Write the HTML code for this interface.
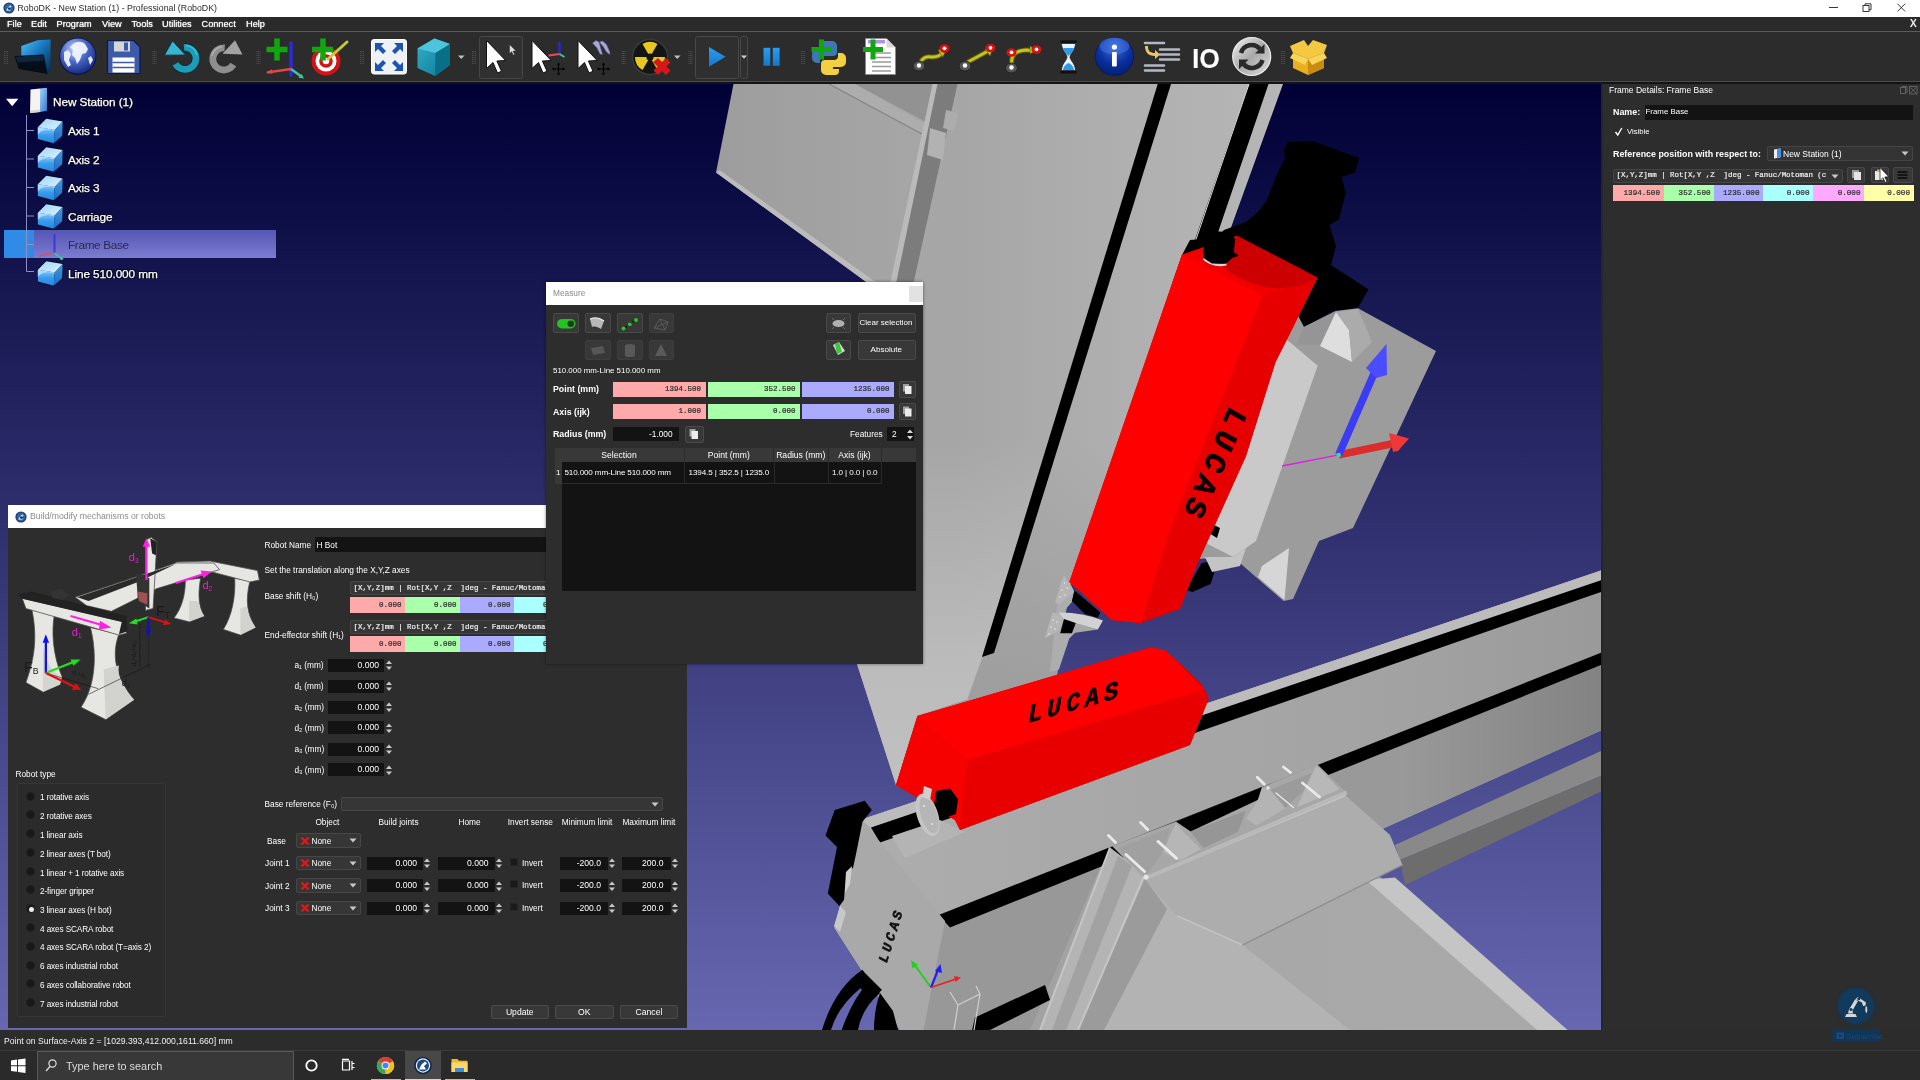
<!DOCTYPE html>
<html lang="en">
<head>
<meta charset="utf-8">
<title>RoboDK - New Station (1) - Professional (RoboDK)</title>
<style>
*{box-sizing:border-box;margin:0;padding:0}
html,body{width:1920px;height:1080px;overflow:hidden;background:#2c2c2c}
body{position:relative;font-family:"Liberation Sans",sans-serif;font-size:9px;color:#fff;-webkit-font-smoothing:antialiased;filter:blur(.55px)}
.abs{position:absolute}
.t{position:absolute;white-space:pre;line-height:1}
#titlebar{position:absolute;left:0;top:0;width:1920px;height:17px;background:#fff;color:#222}
#menubar{position:absolute;left:0;top:17px;width:1920px;height:15px;background:#2a2a2a;border-bottom:1px solid #5c5c5c}
#menubar span{position:absolute;top:3px;font-size:9.2px;color:#fff;line-height:1;text-shadow:0 0 1px #fff}
#toolbar{position:absolute;left:0;top:32px;width:1920px;height:52px;background:#2c2c2c;border-bottom:2px solid #141418;box-shadow:inset 0 -1px 0 #4a4a50}
#viewport{position:absolute;left:0;top:84px;width:1601px;height:946px;overflow:hidden;background:linear-gradient(#000036,#6767b1)}
#rpanel{position:absolute;left:1601px;top:84px;width:319px;height:946px;background:#2d2d2d}
#statusbar{position:absolute;left:0;top:1030px;width:1920px;height:20px;background:#2c2c2c}
#taskbar{position:absolute;left:0;top:1050px;width:1920px;height:30px;background:#2a2a2a;border-top:1px solid #3a3a3a}
.grip{position:absolute;top:20px;width:3px;height:13px;background:repeating-linear-gradient(#555 0 1px,transparent 1px 2px)}
</style>
</head>
<body>
<div id="titlebar">
<svg class="abs" style="left:3px;top:2px" width="12" height="12" viewBox="0 0 12 12"><circle cx="6" cy="6" r="5.6" fill="#1d3f73"/><circle cx="6" cy="6" r="4.3" fill="#2c66a8"/><path d="M3.2 8.6L5.2 5.2 7.4 3.4 8.6 4.6 6.6 6 7.6 8.6z" fill="#fff"/><circle cx="6.2" cy="6.6" r="1.3" fill="#17365f"/></svg>
<span class="t" style="left:17.5px;top:3.5px;font-size:8.800px;color:#2a2a2a">RoboDK - New Station (1) - Professional (RoboDK)</span>
<svg class="abs" style="left:1820px;top:0" width="100" height="17" viewBox="1820 0 100 17" fill="none" stroke="#222" stroke-width="0.9"><path d="M1829 7.5h9"/><rect x="1863" y="5.5" width="6" height="6"/><path d="M1865 5.5v-1.7h6v6h-2"/><path d="M1897.5 3.8l7.6 7.6M1905.100 3.8l-7.6 7.6"/></svg>
</div>
<div id="menubar">
<span style="left:7px">File</span><span style="left:31px">Edit</span><span style="left:56.500px">Program</span><span style="left:102px">View</span><span style="left:131.500px">Tools</span><span style="left:162px">Utilities</span><span style="left:201.500px">Connect</span><span style="left:246px">Help</span>
<span style="left:1910px;font-size:10px;top:2px">X</span>
</div>
<div id="toolbar">
<svg class="abs" style="left:0;top:0" width="1920" height="50" viewBox="0 32 1920 50">
<defs>
<linearGradient id="gFold2" x1="0" y1="0" x2="1" y2="1"><stop offset="0" stop-color="#52c0f4"/><stop offset="0.45" stop-color="#1878c0"/><stop offset="1" stop-color="#052848"/></linearGradient>
<linearGradient id="gFold" x1="0" y1="0" x2="1" y2="1"><stop offset="0" stop-color="#3aa0e8"/><stop offset="0.5" stop-color="#0a3a66"/><stop offset="1" stop-color="#02101e"/></linearGradient>
<radialGradient id="gGlobe" cx="0.4" cy="0.3" r="0.8"><stop offset="0" stop-color="#c8d8ff"/><stop offset="0.45" stop-color="#4a68c8"/><stop offset="1" stop-color="#0c1e70"/></radialGradient>
<radialGradient id="gInfo" cx="0.5" cy="0.25" r="0.9"><stop offset="0" stop-color="#3b6fe0"/><stop offset="0.5" stop-color="#0a2fa0"/><stop offset="1" stop-color="#041860"/></radialGradient>
<linearGradient id="gPlay" x1="0" y1="0" x2="0" y2="1"><stop offset="0" stop-color="#2a9cf0"/><stop offset="1" stop-color="#1577cc"/></linearGradient>
<linearGradient id="gSync" x1="0" y1="0" x2="1" y2="1"><stop offset="0" stop-color="#f4f4f4"/><stop offset="0.5" stop-color="#a8a8a8"/><stop offset="1" stop-color="#e0e0e0"/></linearGradient>
<linearGradient id="gCube" x1="0" y1="0" x2="1" y2="1"><stop offset="0" stop-color="#35b0cc"/><stop offset="1" stop-color="#0a7892"/></linearGradient>
<g id="grip"><path d="M0 0v13M1.500 0v13M3 0v13" stroke="#585858" stroke-width="0.8" stroke-dasharray="1 1"/></g>
<g id="curs"><path d="M0 0v28l6.500-6 4.500 10.500 4-1.800-4.600-10.200 8.800-.5z" fill="#fff" stroke="#111" stroke-width="1"/></g>
<g id="mv"><path d="M-5 0h10M0-5v10" stroke="#000" stroke-width="1.100" fill="none"/><path d="M-6.500 0l2.300-1.800v3.600zM6.500 0l-2.300-1.800v3.600zM0-6.500l-1.800 2.300h3.600zM0 6.500l-1.800-2.300h3.600z" fill="#000"/></g>
</defs>
<use href="#grip" x="4.500" y="51"/><use href="#grip" x="153" y="51"/><use href="#grip" x="257" y="51"/><use href="#grip" x="360.500" y="51"/><use href="#grip" x="472.500" y="51"/><use href="#grip" x="622" y="51"/><use href="#grip" x="689" y="51"/><use href="#grip" x="801.500" y="51"/><use href="#grip" x="1281.500" y="51"/>
<!-- folder -->
<path d="M21.250 45.900l16.250-5.650 13.100-.65v31.900l-3.100 2.500-26-6z" fill="url(#gFold2)"/><path d="M14.400 55.900l29.350-1.300 3.750 19.400-28.750-5z" fill="#050d18"/><path d="M15.500 56.800l27.500-1.200 1 5-26 2z" fill="#12304e" opacity=".7"/>
<!-- globe -->
<circle cx="77.800" cy="56.300" r="18.600" fill="#0b1550"/><circle cx="77.800" cy="56" r="17.600" fill="url(#gGlobe)"/><path d="M73 44c4-3 9-3 12 0l3 5-2 4-4 1-2 6-3 4-2-6-3-3 1-5-3-3zM64 52l4-2 3 4-2 6 2 5-3 2-4-7zM88 58l3-2 2 4-3 5z" fill="#f4f6ff" opacity=".92"/>
<!-- save -->
<path d="M107.500 40.500h26l6.500 6.500v26.500h-32.500z" fill="#3c5aa8" stroke="#0c1a50" stroke-width="1.200"/><rect x="114" y="41.500" width="16" height="10" fill="#d6d6d6"/><rect x="124" y="42.500" width="4" height="8" fill="#3c5aa8"/><rect x="112.500" y="57.500" width="22" height="15" fill="#fff"/><path d="M112.500 62.500h22M112.500 67.500h22" stroke="#3c5aa8" stroke-width="1.300"/>
<!-- undo -->
<path d="M184.040 47.440A11 11 0 1 1 175.470 63.900" fill="none" stroke="#0a2c34" stroke-width="8.600"/><path d="M184.040 47.440A11 11 0 1 1 175.470 63.900" fill="none" stroke="#1c9cb6" stroke-width="6.600"/><path d="M186 45.500A12.500 12.500 0 0 1 197 55" fill="none" stroke="#4cc4dc" stroke-width="2" opacity=".7"/><path d="M172.500 40.900l-8.100 14.300 21.100-.2z" fill="#36b4d0" stroke="#0a2c34" stroke-width=".8"/>
<!-- redo -->
<path d="M224.700 48A11 11 0 1 0 233.300 64.500" fill="none" stroke="#8e8e8e" stroke-width="6.800"/><path d="M222 46.500A12.500 12.500 0 0 0 212 56" fill="none" stroke="#b4b4b4" stroke-width="2" opacity=".7"/><path d="M235 40.300l7.500 14.300-20-.9z" fill="#a2a2a2"/>
<!-- add frame -->
<path d="M291 43v32" stroke="#2a2ae0" stroke-width="3.400" stroke-linecap="round"/><path d="M291 69l-24 3.500" stroke="#e04848" stroke-width="2.600"/><path d="M266 72.500l6-3.200.5 4.500z" fill="#e04848"/><path d="M291 69l11 8" stroke="#38c8a0" stroke-width="2.600"/><path d="M304 78.500l-5.500-.8 3-3.800z" fill="#38c8a0"/><path d="M277 38.500v22M266.500 49.500h21" stroke="#0ea80e" stroke-width="5.500"/>
<!-- add target -->
<circle cx="326" cy="61" r="14.500" fill="#d41414"/><circle cx="326" cy="61" r="10.500" fill="#fff"/><circle cx="326" cy="61" r="6.800" fill="#d41414"/><circle cx="326" cy="61" r="3.300" fill="#fff"/><path d="M328 59l19-17" stroke="#c8c832" stroke-width="3" stroke-linecap="round"/><path d="M323 38.500v22M312 49.500h21" stroke="#0ea80e" stroke-width="5.500"/>
<!-- fit -->
<rect x="371.500" y="39.500" width="35" height="34.500" rx="2.500" fill="#eef1f6" stroke="#fff" stroke-width="1"/><path d="M375 43h9l-3 3 5 5-3 3-5-5-3 3zM403 43v9l-3-3-5 5-3-3 5-5-3-3zM375 71v-9l3 3 5-5 3 3-5 5 3 3zM403 71h-9l3-3-5-5 3-3 5 5 3-3z" fill="#1c54b0"/>
<!-- cube -->
<path d="M417.500 48.500l17-10 15.500 5.500v21l-15 11-17.500-8z" fill="url(#gCube)"/><path d="M417.500 48.500l17-10 15.500 5.500-14.500 9z" fill="#4cc4dc"/><path d="M435.500 53l14.500-9v21l-15 11z" fill="#077088"/>
<path d="M458 55.500h6.500l-3.250 3.500z" fill="#bdbdbd"/>
<!-- select -->
<rect x="479.500" y="36.500" width="43" height="42" rx="2" fill="#303030" stroke="#474747"/>
<use href="#curs" x="486.500" y="40.500"/><path d="M509.500 44.500v9l2.200-1.800 1.600 3.500 1.400-.7-1.600-3.400 3-.2z" fill="#ddd" stroke="#222" stroke-width=".5"/>
<use href="#curs" x="532" y="40.500"/><use href="#mv" x="558.500" y="69"/><path d="M559.500 42v12" stroke="#2a2ac8" stroke-width="2.400"/><path d="M559.500 54l-11 1.500" stroke="#e05050" stroke-width="2"/><path d="M559.500 54l5 3" stroke="#38c890" stroke-width="2"/>
<use href="#curs" x="578" y="40.500"/><use href="#mv" x="603.500" y="69"/><path d="M592.500 43l3.500-2.500 3 1.500 1.500 5.500 2 7-2.500-.5-3-6zM599.500 42l3-1 4 3.500 3.500 8-.5 2-3-2.500-3-5z" fill="#a8a8d8" stroke="#5c5c98" stroke-width=".6"/>
<!-- radiation -->
<circle cx="650" cy="57" r="17.500" fill="#141414" stroke="#3a3a3a" stroke-width="1.500"/><path d="M650 57l-7.500-13a15 15 0 0 1 15 0zM650 57l15 0a15 15 0 0 1-7.500 13zM650 57l-7.500 13a15 15 0 0 1-7.500-13z" fill="#e8c820"/><circle cx="650" cy="57" r="3.600" fill="#141414"/><path d="M653 62l5-4 4 4 4-4 4.500 4.500-4 4 4 4-4.500 4.500-4-4-4 4-4.500-4.500 4-4z" fill="#d41818"/>
<path d="M674 55.500h6.500l-3.250 3.500z" fill="#bdbdbd"/>
<!-- play -->
<rect x="695.500" y="36.500" width="43" height="42" rx="2" fill="#2f2f2f" stroke="#484848"/><rect x="740.500" y="36.500" width="7" height="42" rx="2" fill="#2f2f2f" stroke="#484848"/>
<path d="M709 47l16.500 9.800-16.500 10z" fill="url(#gPlay)"/><path d="M741 55.500h6l-3 3.200z" fill="#d0d0d0"/>
<rect x="763.500" y="47.800" width="6.800" height="18" fill="url(#gPlay)"/><rect x="772.800" y="47.800" width="6.800" height="18" fill="url(#gPlay)"/>
<!-- python -->
<path d="M823 41h9a5 5 0 0 1 5 5v6a4 4 0 0 1-4 4h-9a4 4 0 0 0-4 4v3h-3a5 5 0 0 1-5-5v-4a5 5 0 0 1 5-5h8v-2h-6v-2a4 4 0 0 1 4-4z" fill="#3d78b0"/><path d="M835 75h-9a5 5 0 0 1-5-5v-6a4 4 0 0 1 4-4h9a4 4 0 0 0 4-4v-3h3a5 5 0 0 1 5 5v4a5 5 0 0 1-5 5h-8v2h6v2a4 4 0 0 1-4 4z" fill="#f2d040"/><path d="M821.500 39.500v20M811.500 49.500h20" stroke="#0ea80e" stroke-width="5"/>
<!-- add doc -->
<path d="M865.500 38.500h21l9 9v27h-30z" fill="#fdfdfd" stroke="#888" stroke-width=".8"/><path d="M886.500 38.500v9h9z" fill="#d8d8d8"/><rect x="868" y="40" width="17" height="3.500" fill="#b090f0"/><path d="M872 53h19M872 57.500h19M872 62h19M872 66.500h19M872 71h19" stroke="#9a9a9a" stroke-width="1.300"/><path d="M873 39.500v20M863 49.500h20" stroke="#0ea80e" stroke-width="5"/>
<!-- paths -->
<g fill="none" stroke-linecap="round"><path d="M920 63c4-8 9-6 13-6s8-2 10-5" stroke="#5a5a10" stroke-width="5"/><path d="M920 63c4-8 9-6 13-6s8-2 10-5" stroke="#c4c41c" stroke-width="3"/><path d="M966 63l24-13" stroke="#5a5a10" stroke-width="5"/><path d="M966 63l24-13" stroke="#c4c41c" stroke-width="3"/><path d="M1012 66c-2-12 4-15 14-16l12 1" stroke="#5a5a10" stroke-width="5"/><path d="M1012 66c-2-12 4-15 14-16l12 1" stroke="#c4c41c" stroke-width="3"/></g>
<path d="M946 49l-8 1 5 7zM993 48l-8 1 5 7zM1030 46v8l6-4z" fill="#c4c41c" stroke="#5a5a10" stroke-width=".6"/>
<g><ellipse cx="919" cy="66" rx="6" ry="5" fill="#555" stroke="#222"/><circle cx="919" cy="65.500" r="2.200" fill="#fff"/><ellipse cx="965" cy="66" rx="6" ry="5" fill="#555" stroke="#222"/><circle cx="965" cy="65.500" r="2.200" fill="#fff"/><ellipse cx="1011.500" cy="68" rx="6" ry="5" fill="#555" stroke="#222"/><circle cx="1011.500" cy="67.500" r="2.200" fill="#fff"/>
<ellipse cx="944.500" cy="48.500" rx="5" ry="4.200" fill="#d81010"/><circle cx="944.500" cy="48.300" r="1.900" fill="#fff"/><ellipse cx="990.500" cy="48" rx="5" ry="4.200" fill="#d81010"/><circle cx="990.500" cy="47.800" r="1.900" fill="#fff"/><ellipse cx="1011.500" cy="52.500" rx="5" ry="4.200" fill="#d81010"/><circle cx="1011.500" cy="52.300" r="1.900" fill="#fff"/><ellipse cx="1036.500" cy="49.500" rx="5" ry="4.200" fill="#d81010"/><circle cx="1036.500" cy="49.300" r="1.900" fill="#fff"/></g>
<!-- hourglass -->
<path d="M1060 40h17v3.500h-17zM1060 70.500h17v3.500h-17z" fill="#111" stroke="#333" stroke-width=".6"/><path d="M1061.500 43.500h14c0 7-5.500 10-5.500 13.500s5.500 6.500 5.500 13.500h-14c0-7 5.500-10 5.500-13.500s-5.500-6.500-5.500-13.500z" fill="#e8f4ff" stroke="#222" stroke-width=".8"/><path d="M1063 48h11c-1 4-4 6-5.500 8-1.500-2-4.500-4-5.500-8zM1063 70c.5-4 3-6 5.500-7 2.500 1 5 3 5.500 7z" fill="#2f9ae8"/>
<!-- info -->
<circle cx="1114.400" cy="56.500" r="19.600" fill="#0a1a60"/><circle cx="1114.400" cy="56.300" r="18.600" fill="url(#gInfo)"/><ellipse cx="1114.400" cy="46" rx="15" ry="8.500" fill="#5a8af0" opacity=".35"/><circle cx="1114.400" cy="47" r="2.600" fill="#fff"/><rect x="1112" y="52" width="4.800" height="14.500" rx=".8" fill="#fff"/>
<!-- list -->
<path d="M1145 43h19M1160 49.500h19M1160 54.500h19M1160 59.500h19M1145 65.500h19M1145 70.500h19" stroke="#b4b8c4" stroke-width="2.600" stroke-linecap="round"/><path d="M1148 46c0 5 2 7 7 7v-3l5 4.500-5 4.500v-3c-7 0-10-4-10-10z" fill="#e8c860"/>
<!-- IO -->
<text x="1192" y="67.500" font-family="Liberation Sans,sans-serif" font-size="27" font-weight="bold" fill="#fff" textLength="28" lengthAdjust="spacingAndGlyphs">IO</text>
<!-- sync -->
<circle cx="1251.700" cy="56.500" r="19" fill="url(#gSync)"/><circle cx="1251.700" cy="56.500" r="19" fill="none" stroke="#eee" stroke-width="1.200"/><path d="M1241 53a11 11 0 0 1 19-4" fill="none" stroke="#2a2a2a" stroke-width="4.500"/><path d="M1262.500 60a11 11 0 0 1-19 4" fill="none" stroke="#2a2a2a" stroke-width="4.500"/><path d="M1264.500 44v9.500h-9.500zM1239 69v-9.500h9.500z" fill="#2a2a2a"/>
<!-- box -->
<path d="M1293 53l15 6 16-6v15l-16 7-15-7z" fill="#e8b020"/><path d="M1308 59l16-6v15l-16 7z" fill="#c88c10"/><path d="M1293 53l-3-7 14-6 4 6zM1324 53l3-8-14-5-5 6zM1293 53l15 6 16-6-16-7z" fill="#f4c840"/><path d="M1293 53l15 6-3 6-15-7zM1324 53l-16 6 4 6 15-7z" fill="#f8d458"/>
</svg>
</div>
<div id="viewport">
<svg class="abs" style="left:0;top:0" width="1601" height="946" viewBox="0 84 1601 946">
<defs>
<linearGradient id="gBeam" x1="957" y1="0" x2="1280" y2="0" gradientUnits="userSpaceOnUse"><stop offset="0" stop-color="#a6a6a6"/><stop offset="0.55" stop-color="#b0b0b0"/><stop offset="1" stop-color="#b6b6b6"/></linearGradient>
<linearGradient id="gPlate" x1="716" y1="0" x2="940" y2="0" gradientUnits="userSpaceOnUse"><stop offset="0" stop-color="#9d9d9d"/><stop offset="1" stop-color="#a7a7a7"/></linearGradient>
<linearGradient id="gFront" x1="940" y1="0" x2="1601" y2="0" gradientUnits="userSpaceOnUse"><stop offset="0" stop-color="#999999"/><stop offset="0.7" stop-color="#999999"/><stop offset="1" stop-color="#838383"/></linearGradient>
<linearGradient id="gTop" x1="862" y1="0" x2="1601" y2="0" gradientUnits="userSpaceOnUse"><stop offset="0" stop-color="#adadad"/><stop offset="0.7" stop-color="#a3a3a3"/><stop offset="1" stop-color="#9a9a9a"/></linearGradient>
<linearGradient id="gLow" x1="1050" y1="0" x2="1560" y2="0" gradientUnits="userSpaceOnUse"><stop offset="0" stop-color="#a2a2a2"/><stop offset="0.35" stop-color="#a8a8a8"/><stop offset="1" stop-color="#a9a9a9"/></linearGradient>
<linearGradient id="gBL" x1="0" y1="440" x2="0" y2="780" gradientUnits="userSpaceOnUse"><stop offset="0" stop-color="#bfbfbf" stop-opacity="0"/><stop offset="0.65" stop-color="#bfbfbf" stop-opacity=".85"/><stop offset="1" stop-color="#c0c0c0" stop-opacity="1"/></linearGradient>
<linearGradient id="gBR" x1="0" y1="440" x2="0" y2="700" gradientUnits="userSpaceOnUse"><stop offset="0" stop-color="#a0a0a0" stop-opacity="0"/><stop offset="1" stop-color="#9e9e9e" stop-opacity="1"/></linearGradient>
</defs>
<!-- top-left plate -->
<g id="plate">
<polygon points="733.5,84 716,172.5 880,292 960,292 960,84" fill="url(#gPlate)"/>
<polygon points="716,172.5 719.5,170 884,288 880,292" fill="#bcbcbc"/>
<polygon points="855,84 934,84 926,122" fill="#929292"/>
<polygon points="829,84 855,84 925,124 922,134" fill="#adadad"/><path d="M829 84L922 134" stroke="#868686" stroke-width="1.400"/>
<polygon points="932.5,84 937.5,84 896,284 890,284" fill="#bababa"/>
<polygon points="937.5,84 958,84 914,284 896,284" fill="#7c7c7c"/>
</g>
<!-- vertical beam -->
<polygon points="957.5,84 1283,84 1229,233 1182,255 1069.700,586 1057,675 917.500,716 896,785 857,664 912,290" fill="url(#gBeam)"/>
<polygon points="912,290 1094,290 982,657 967.400,699.400 917,715.600 896,785 857,664" fill="url(#gBL)"/><polygon points="1050,440 1120,440 1069.700,586 1057,675 917.500,716 967.400,699.400 983,657" fill="url(#gBR)"/>
<polygon points="930,128 946,133 943,160 927,155" fill="#b2b2b2"/><polygon points="946,110 958,113 954,131 943,128" fill="#adadad"/>
<polygon points="1157.700,84 1171,84 994,653 982,657" fill="#000"/>
<polygon points="1249,84 1268.500,84 1212,250 1185,262 1190,254" fill="#000"/>
<path d="M1249 84L1191 254" stroke="#d8d8d8" stroke-width="1"/>
<!-- black motor -->
<polygon points="1224,230 1246,222 1243,242 1198,254" fill="#000"/>
<polygon points="1288,142 1312,141 1359,158 1355,172.500 1341.700,176.700 1345.700,193 1339,219.600 1329.600,225 1336,246.500 1331,265 1368.500,289.500 1357.800,308 1333.600,311 1304,327 1262,296 1182,255 1190,240 1241,235.800 1246,222 1258.500,211.600 1266.500,201 1276,176.700 1285,158 1284,150" fill="#000"/>
<!-- carriage right of red box -->
<polygon points="1290,300 1304,327 1336,311 1358,308.300 1436,351 1353,528 1319,541 1293,599 1283.600,601 1233,557 1180,560" fill="#9c9c9c"/>
<polygon points="1285,338 1317.700,365.700 1256,541 1233,557 1200,540" fill="#c9c9c9"/>
<polygon points="1304,327 1336,311 1322,345 1296,345" fill="#959595"/>
<polygon points="1336,312 1320,346 1352,362 1349,330" fill="#dedede"/><polygon points="1336,312 1358,309 1372,342 1352,362 1349,330" fill="#ababab"/>
<polygon points="1262,566 1289,548 1284.500,600 1258,577" fill="#d6d6d6"/>
<polygon points="1201.500,563.300 1218.300,559.400 1210.600,584 1192.400,591.900 1186,590" fill="#000"/><polygon points="1212,524 1220,528 1217,538 1209,533" fill="#000"/>
<polygon points="1205,557 1233,557 1246,548 1240,566 1212,572" fill="#c4c4c4"/>
<!-- bracket under red box -->
<polygon points="1060,580 1069.300,581.500 1074.400,592 1071.900,602 1062.800,612.600 1077,630.700 1069.300,638.500 1058.900,669.600 1050,672" fill="#adadad"/>
<polygon points="1064,575 1074.400,591.900 1058.900,604.800 1055,602.200" fill="#b6b6b6"/><polygon points="1052.400,612.600 1062.800,615.200 1058.900,630.700 1044.600,638.500" fill="#b6b6b6"/>
<g fill="#e6e6e6"><circle cx="1064.500" cy="583" r=".8"/><circle cx="1067.500" cy="588" r=".8"/><circle cx="1062" cy="590" r=".8"/><circle cx="1065" cy="595" r=".8"/><circle cx="1060" cy="597" r=".8"/><circle cx="1053" cy="620" r=".8"/><circle cx="1057" cy="622" r=".8"/><circle cx="1051" cy="627" r=".8"/><circle cx="1055" cy="629" r=".8"/><circle cx="1049" cy="634" r=".8"/></g>
<polygon points="1074.400,590.600 1082.200,597 1100.400,612.600 1097.800,617.800 1084.800,614 1071.900,601" fill="#000"/>
<path d="M1058.900 612.600Q1080 612 1103 620.400L1097.800 629.400Q1082 626 1064 619.500Z" fill="#d2d2d2"/>
<polygon points="1075.700,623 1097.800,629.400 1071.900,633.300" fill="#a8a8a8"/>
<polygon points="1064,619 1075.700,623 1071.900,633.300 1060.200,633.300" fill="#000"/>
<!-- upper red box -->
<polygon points="1182,254.600 1237,235.800 1317.500,277.400 1291.700,330 1275.500,362 1246,456 1197.700,563 1180,608.800 1139.400,623 1111.800,620 1069.300,582" fill="#f00000"/>

<polygon points="1182,254.600 1262.500,296.200 1170,530 1141,623 1111.800,620 1069.300,582" fill="#ff0000"/>
<polygon points="1262.500,296.200 1317.500,277.400 1291.700,330 1275.500,362 1246,456 1197.700,563 1180,608.800 1141,623 1170,530" fill="#e60000"/>
<path d="M1237 236L1317.500 277.800Q1292 292 1264 287Q1238 280 1222 266Z" fill="#cc0000"/>
<path d="M1203.400 258.500Q1212 267 1226.500 264.500" fill="none" stroke="#d4d4d4" stroke-width="2.200"/>
<polygon points="1214.400,231 1230,232.400 1235.200,238.900 1233.900,251.900 1239,255.700 1232.600,257.700 1226,263.500 1211.900,263.500 1204,258.300 1202.800,251.900 1206,240" fill="#000"/>
<text transform="translate(1230,405) rotate(113.500) skewX(-6)" font-family="Liberation Mono,monospace" font-weight="bold" font-size="30" fill="#0a0000" stroke="#0a0000" stroke-width=".7" letter-spacing="6.500">LUCAS</text>
<!-- frame arrows -->
<path d="M1282 466L1338.700 454.800" stroke="#e020e0" stroke-width="1.300"/>
<path d="M1338.700 454.800L1396 443" stroke="#dc2c2c" stroke-width="7.500"/><polygon points="1389,433 1409,438.500 1398,451 1393,452" fill="#f03838"/>
<path d="M1338.700 454.800L1376 369" stroke="#3c3cf4" stroke-width="7.500"/><polygon points="1366,368 1386.500,344 1387,375 1376,378" fill="#4c4cff"/>
<circle cx="1338.700" cy="455" r="2.200" fill="#30e0a0"/>
<!-- horizontal beam -->
<polygon points="861.500,819.500 1601,570.600 1601,730.600 935,1030 900,1030 834.500,928" fill="#a9a9a9"/>
<polygon points="861.500,819.500 1601,570.600 1601,665 945,921" fill="url(#gTop)"/>
<polygon points="861.500,819.500 1601,570.600 1601,581 871,828" fill="#bcbcbc"/>
<polygon points="1601,665 1601,730.600 935,1030 922.500,1030 945,921" fill="url(#gFront)"/>
<polygon points="945,921 1108,856 1050,1030 922.500,1030" fill="#989898"/>
<polygon points="1601,580.200 1601,591.900 880,842.500 871,827.500" fill="#000"/>
<polygon points="1601,652.800 1601,665 950,927.500 938.700,915" fill="#000"/>
<polygon points="1601,751 1601,776 1400,860 1395,845" fill="#898989"/><polygon points="1601,776 1601,791.500 1405,885 1400,860" fill="#6d6d6d"/>
<!-- lower big plate -->
<polygon points="1100,868 1345,795 1380,877 1567.500,1030 1030,1030" fill="url(#gLow)"/>
<polygon points="1366,880 1395,877.500 1567.500,1030 1537,1030" fill="#c5c5c5"/>
<polygon points="1145,879 1177.500,916 1242.500,945 1350,1030 1070,1030" fill="#b3b3b3"/><polygon points="1145,879 1167,909 1104,1030 1076,1030" fill="#9b9b9b"/>
<!-- bracket rail -->
<polygon points="1110,847.500 1145,874 1078,1030 1040,1030" fill="#b4b4b4"/><polygon points="1118,856 1132,866 1066,1030 1052,1030" fill="#a2a2a2"/><path d="M1110 847.500L1040 1030M1145 874L1078 1030" stroke="#c6c6c6" stroke-width="2"/>
<!-- carriage plate -->
<polygon points="1145,878.700 1345,795 1390,835 1402.500,865 1242.500,945 1177.500,916" fill="#adadad"/>
<path d="M1145 878.700L1345 795" stroke="#c8c8c8" stroke-width="2.500"/><path d="M1177.500 916L1242.500 945" stroke="#c2c2c2" stroke-width="1.500" fill="none"/><path d="M1242.500 945L1402.500 865" stroke="#8c8c8c" stroke-width="1.300" fill="none"/>
<!-- brackets on top -->
<polygon points="1112,846 1176,821.500 1262,787 1317.500,764.600 1347,793 1145,879" fill="#a7a7a7"/>
<polygon points="1176,821.500 1262,787 1257.700,800 1190.600,831.500" fill="#000"/>
<polygon points="1190.600,831.700 1246,810.500 1238,831.700 1203.700,848" fill="#969696"/>
<polygon points="1270.800,789.400 1312,773 1303,791 1285.400,808.300" fill="#9b9b9b"/>
<polygon points="1119,848 1170,828 1163,852 1147,874 1130,862" fill="#a0a0a0"/>
<polygon points="1176,823 1183.300,831.700 1200.800,849 1180.400,860.800 1163,852 1171.700,831.700" fill="#b6b6b6"/>
<polygon points="1262,788 1269.400,789.400 1285.400,808.300 1256.300,825.800 1246,818.500 1259.200,798" fill="#b4b4b4"/>
<polygon points="1316,766 1320.400,769 1339.400,789.400 1297,806.900 1305.800,788" fill="#b8b8b8"/>
<path d="M1145.400 878.300L1346.700 792.300" stroke="#b9b9b9" stroke-width="4"/>
<g stroke="#eaeaea" stroke-width="2.800" stroke-linecap="round"><path d="M1108.500 835.600l7 7M1140.600 822.500l7 7M1126 854.500l18.500 17M1158 841.400l18.500 17M1257.300 777.300l7 7M1283.500 767l7 5.500M1302.500 783l17 14"/><path d="M1276 793l17.500 14.500" stroke-width="1.300"/></g>
<circle cx="1146" cy="877" r="2.600" fill="#e4e4e4"/><circle cx="1268" cy="788" r="1.800" fill="#e4e4e4"/>
<!-- end cap -->
<polygon points="861.500,819.500 940,915 945,921 923.500,1030 900,1030 834.500,928" fill="#a9a9a9"/>
<polygon points="825.500,835.500 834.700,810 864.800,800.800 871.800,810 862.500,821.700 855.500,856.400 853,868 846,872.600 844,900 839.400,906 827.800,893.400 837,847" fill="#000"/><polygon points="846,872 852,866 850,884 845,893" fill="#d0d0d0"/><polygon points="834,926 840,906 846,912 840,932" fill="#c8c8c8"/>
<path d="M862.500 969.800Q834.700 988.300 822 1030L831 1030Q839.400 1002 869.400 981.400Z" fill="#000"/><path d="M869 981Q852 1000 841.700 1030L858 1030Q862 1008 880 993Z" fill="#000"/><path d="M880 993L893 1011 898 1030 874 1030Q874 1010 880 993Z" fill="#000"/><path d="M862 970L882 990 870 1000 858 985Z" fill="#000"/>
<polygon points="975,1017.500 1045,985 1050,1000 990,1030 972,1030" fill="#000"/>
<path d="M950 992l8 13 22-11-4-8M958 1005l-4 25M980 994l-6 36" stroke="#d0d0d0" stroke-width="1.200" fill="none"/>
<text transform="translate(886.500,964) rotate(-72.500) skewX(-10)" font-family="Liberation Mono,monospace" font-weight="bold" font-size="13.500" fill="#111" stroke="#111" stroke-width=".5" letter-spacing="3.200">LUCAS</text>
<path d="M931 987.500L914 964" stroke="#20d020" stroke-width="2"/><polygon points="911,960 918,965 912.500,968.500" fill="#20d020"/><path d="M931 987.500L938 970" stroke="#2020f0" stroke-width="2.200"/><polygon points="935,971 940.500,964 942,973" fill="#2020f0"/><path d="M931 987.500L956 979" stroke="#f02020" stroke-width="1.800"/><polygon points="954,976 961,977.500 955.500,982" fill="#f02020"/>
<!-- cylinder bracket -->
<polygon points="892,836 940,820 965,832 905,858" fill="#b4b4b4"/>
<!-- lower red box -->
<polygon points="917.500,716 1150,647.500 1165,650 1200,682.500 1208.700,698.700 1190,745 960,830 955,820 896,785" fill="#f00000"/>
<polygon points="917.500,716 967.500,760 960,830 955,820 896,785" fill="#f60000"/>
<polygon points="917.500,716 1150,647.500 1165,650 1200,682.500 1205,690 967.500,760" fill="#ff0000"/>
<polygon points="967.500,760 1205,690 1208.700,698.700 1190,745 960,830" fill="#e80000"/>
<polygon points="1165,650 1200,682.500 1208.700,698.700 1205,690" fill="#dc0000"/>
<polygon points="936,791 950,788.500 958,799 956,814 941,819 934,806" fill="#000"/>
<ellipse cx="927.500" cy="815" rx="10.500" ry="22" transform="rotate(-18 927.500 815)" fill="#c6c6c6"/><ellipse cx="929" cy="815" rx="8" ry="19" transform="rotate(-18 929 815)" fill="#b6b6b6"/><polygon points="924,786 932,789 930,800 922,797" fill="#d0d0d0"/><circle cx="924" cy="806" r="1" fill="#e8e8e8"/><circle cx="932" cy="824" r="1" fill="#e8e8e8"/>
<text transform="translate(1027,723) rotate(-15.500) skewX(-24)" font-family="Liberation Mono,monospace" font-weight="bold" font-size="24.500" fill="#0a0000" stroke="#0a0000" stroke-width=".6" letter-spacing="5">LUCAS</text>
</svg>
</div>
<div id="tree" class="abs" style="left:0;top:84px;width:330px;height:220px">
<div class="abs" style="left:4px;top:145.500px;width:272px;height:28.500px;background:linear-gradient(#5656b4,#7c7cd2)"></div>
<div class="abs" style="left:4px;top:145.500px;width:30px;height:28.500px;background:#2f8be6"></div>
<svg class="abs" style="left:0;top:0" width="330" height="220" viewBox="0 84 330 220">
<defs>
<linearGradient id="cbT" x1="0" y1="0" x2="1" y2="1"><stop offset="0" stop-color="#9ad4fc"/><stop offset="1" stop-color="#e0f2ff"/></linearGradient>
<linearGradient id="cbL" x1="0" y1="0" x2="0" y2="1"><stop offset="0" stop-color="#8ccffc"/><stop offset="0.5" stop-color="#3a9cec"/><stop offset="1" stop-color="#2488e4"/></linearGradient>
<linearGradient id="cbR" x1="0" y1="0" x2="0" y2="1"><stop offset="0" stop-color="#3f9ae6"/><stop offset="1" stop-color="#1a6cc8"/></linearGradient>
<linearGradient id="stB" x1="0" y1="0" x2="1" y2="1"><stop offset="0" stop-color="#a8d4f8"/><stop offset="1" stop-color="#2f78d0"/></linearGradient>
<g id="cube"><path d="M-12.200-3.750L-3.750-12.200 12.650-9.400 12.200 4.700 3.750 12.200-12.200 8z" fill="#0a1030" stroke="#060818" stroke-width="1.600" stroke-linejoin="round"/><path d="M-12.200-3.750L-3.750-12.200 12.650-9.400 4.700-.9z" fill="url(#cbT)"/><path d="M-12.200-3.750L4.700-.9 3.750 12.200-12.200 8z" fill="url(#cbL)"/><path d="M4.700-.9L12.650-9.400 12.200 4.700 3.750 12.200z" fill="url(#cbR)"/><path d="M-12.200 3.500c3-5 10-6 16.600-3.500l.3-.9-16.900-2.850z" fill="#bfe6ff" opacity=".75"/></g>
</defs>
<path d="M26.500 115v156.500h7.500M26.500 130.500h7.500M26.500 159h7.500M26.500 187.500h7.500M26.500 216h7.500M26.500 244.500h7.500" stroke="#8e8ec4" stroke-width="1" fill="none"/>
<path d="M6 98.700h12.400l-6.200 7.600z" fill="#fff"/>
<path d="M30.500 89.500l9.500-1v23.500l-10 1z" fill="#f4f4f2"/><path d="M40 88.500l7-.7v23l-7 1.200z" fill="url(#stB)"/><path d="M30 110.500l10-1v2.500l-10 1z" fill="#d8d8d4"/>
<use href="#cube" x="50" y="131"/><use href="#cube" x="50" y="159.500"/><use href="#cube" x="50" y="188"/><use href="#cube" x="50" y="216.500"/><use href="#cube" x="50" y="273.500"/>
<path d="M54.500 234v19" stroke="#3a3ad8" stroke-width="2"/><path d="M54.500 253l-16 3" stroke="#d85060" stroke-width="1.600"/><path d="M54.500 253l7 5.500" stroke="#38c8a0" stroke-width="1.600"/><circle cx="61.500" cy="258.500" r="1.600" fill="#38c8a0"/>
</svg>
<style>#tree .tt{position:absolute;white-space:nowrap;font-size:11.800px;line-height:1;color:#fff;text-shadow:1px 1px 0 #0a0a28,-1px 1px 0 #0a0a28,1px -1px 0 #0a0a28,-1px -1px 0 #0a0a28,0 1px 0 #0a0a28,0 -1px 0 #0a0a28;letter-spacing:-.1px;-webkit-text-stroke:.25px #fff}</style>
<span class="tt" style="left:53px;top:13.0px">New Station (1)</span>
<span class="tt" style="left:68px;top:42.0px">Axis 1</span>
<span class="tt" style="left:68px;top:70.5px">Axis 2</span>
<span class="tt" style="left:68px;top:99.0px">Axis 3</span>
<span class="tt" style="left:68px;top:127.5px">Carriage</span>
<span class="tt" style="left:68px;top:156px;color:#2a2a50;text-shadow:none;-webkit-text-stroke:0;letter-spacing:-.35px">Frame Base</span>
<span class="tt" style="left:68px;top:184.5px">Line 510.000 mm</span>
</div>
<div id="rpanel">
<style>
#rpanel .b{font-weight:bold}
#rpanel .t{font-size:8.900px;color:#fff}
#rpanel .cell{position:absolute;top:101px;height:16px;font-family:"Liberation Mono",monospace;font-size:7.600px;color:#2a2a2a;-webkit-text-stroke:.2px #2a2a2a;text-align:right;line-height:16.500px;padding-right:3.500px}
</style>
<div class="abs" style="left:0;top:0;width:2px;height:946px;background:#262626"></div>
<span class="t" style="left:8px;top:1.500px;font-size:8.500px">Frame Details: Frame Base</span>
<svg class="abs" style="left:297px;top:2px" width="20" height="9" viewBox="0 0 20 9" fill="none" stroke="#666" stroke-width=".9"><rect x="2.500" y="1.500" width="5" height="6"/><path d="M4 1.500v-1h5v6h-1.500"/><rect x="11.500" y=".5" width="7.500" height="7.500"/><path d="M12.500 1.500l5.500 5.500M18 1.500l-5.500 5.500"/></svg>
<span class="t b" style="left:12px;top:24px">Name:</span>
<div class="abs" style="left:43.500px;top:20.500px;width:268.500px;height:15px;background:#131313"></div>
<span class="t" style="left:44.500px;top:24.300px;font-size:7.900px">Frame Base</span>
<svg class="abs" style="left:13px;top:43px" width="10" height="10" viewBox="0 0 10 10"><path d="M1.500 5l2.300 3 4-7" stroke="#fff" stroke-width="1.400" fill="none"/></svg>
<span class="t" style="left:26px;top:43.800px;font-size:7.700px">Visible</span>
<span class="t b" style="left:12px;top:65.500px">Reference position with respect to:</span>
<div class="abs" style="left:165.500px;top:61.500px;width:146px;height:15.500px;background:#343434;border:1px solid #454545;border-radius:2px"></div>
<svg class="abs" style="left:172px;top:63.500px" width="9" height="11" viewBox="0 0 9 11"><path d="M1 1.500l6-1v9l-6 1z" fill="#eee"/><path d="M4 1l4-.7v9l-4 .8z" fill="#4a90e0"/></svg>
<span class="t" style="left:182px;top:65.500px;font-size:8.500px">New Station (1)</span>

<svg class="abs" style="left:300px;top:67px" width="8" height="5" viewBox="0 0 8 5"><path d="M.5.5h7l-3.500 4z" fill="#c8c8c8"/></svg>
<div class="abs" style="left:12px;top:84.500px;width:229.500px;height:14.500px;background:#353535;border:1px solid #454545;border-radius:2px"></div>
<span class="t" style="left:15.500px;top:88px;font-family:'Liberation Mono',monospace;font-size:7.450px;color:#f0f0f0;-webkit-text-stroke:.2px #f0f0f0">[X,Y,Z]mm | Rot[X,Y ,Z  ]deg - Fanuc/Motoman (c</span>
<svg class="abs" style="left:230px;top:89.500px" width="8" height="5" viewBox="0 0 8 5"><path d="M.5.5h7l-3.500 4z" fill="#c8c8c8"/></svg>
<div class="abs" style="left:246px;top:83px;width:18px;height:16px;background:#383838;border:1px solid #484848;border-radius:2px"></div>
<div class="abs" style="left:270px;top:83px;width:18px;height:16px;background:#383838;border:1px solid #484848;border-radius:2px"></div>
<div class="abs" style="left:292px;top:83px;width:19.500px;height:16px;background:#383838;border:1px solid #484848;border-radius:2px"></div>
<svg class="abs" style="left:246px;top:83px" width="66" height="16" viewBox="0 0 66 16"><rect x="5" y="3" width="7" height="8" fill="#9a9a9a"/><rect x="7" y="5" width="7" height="8" fill="#e4e4e4"/><rect x="28" y="4" width="8" height="9" fill="#e8e8e8"/><rect x="30" y="2.500" width="4" height="2.500" fill="#d8b060"/><path d="M50.500 5h10M50.500 8h10M50.500 11h10" stroke="#0a0a0a" stroke-width="1.600"/>
<path d="M33 .5v13l3-2.800 2.200 4.800 1.800-.9-2.200-4.600 4-.3z" fill="#fff" stroke="#111" stroke-width=".7"/></svg>
<div class="cell" style="left:12px;width:50.500px;background:#ffaaaa">1394.500</div>
<div class="cell" style="left:62.500px;width:50.500px;background:#aaffaa">352.500</div>
<div class="cell" style="left:113px;width:49px;background:#aaaaff">1235.000</div>
<div class="cell" style="left:162px;width:50px;background:#aaffff">0.000</div>
<div class="cell" style="left:212px;width:51px;background:#ffaaff">0.000</div>
<div class="cell" style="left:263px;width:49.500px;background:#ffffaa">0.000</div>

</div>
<div id="build" class="abs" style="left:7.500px;top:504.500px;width:679.500px;height:523.500px;background:#2d2d2d;z-index:3">
<style>
#build .t{font-size:8.300px;color:#fff}
#build .in{position:absolute;background:#131313}
#build .sp{position:absolute;height:13px;background:#131313;font-size:8.600px;color:#fff;text-align:right;line-height:13.500px}
#build .cb{position:absolute;height:14.500px;background:#363636;border:1px solid #474747;border-radius:2px}
#build .f{position:absolute;height:16.500px;font-family:"Liberation Mono",monospace;font-size:7.500px;color:#2a2a2a;-webkit-text-stroke:.2px #2a2a2a;text-align:right;line-height:17px;padding-right:3.500px}
#build .btn{position:absolute;top:500px;height:14.500px;background:#383838;border:1px solid #4a4a4a;border-radius:2px;font-size:8.600px;text-align:center;line-height:13px;color:#fff}
#build .rd{position:absolute;left:18.500px;width:9px;height:9px;border-radius:50%;background:#181818;border:1px solid #202020}
#build .rl{position:absolute;left:32.500px;font-size:8.200px;white-space:pre;line-height:1;color:#fff;letter-spacing:-.1px}
</style>
<div class="abs" style="left:0;top:0;width:680px;height:23px;background:#fff"></div>
<svg class="abs" style="left:7px;top:6px" width="12" height="12" viewBox="0 0 12 12"><circle cx="6" cy="6" r="5.600" fill="#1d3f73"/><circle cx="6" cy="6" r="4.300" fill="#2c66a8"/><path d="M3.200 8.600L5.200 5.200 7.400 3.400 8.600 4.600 6.600 6 7.600 8.600z" fill="#fff"/><circle cx="6.200" cy="6.600" r="1.300" fill="#17365f"/></svg>
<span class="t" style="left:22.500px;top:7px;color:#8c8c8c;font-size:8.700px">Build/modify mechanisms or robots</span>
<!-- robot picture -->
<svg class="abs" style="left:-2.500px;top:20.500px" width="270" height="205" viewBox="0 0 1422 1080">
<g fill="#e6e6e2" stroke="#4a4a4a" stroke-width="4" stroke-linejoin="round">
<path d="M950 290L1030 280C1015 370 1020 430 1050 480L970 510 890 490C930 440 950 370 950 290Z"/>
<path d="M1210 280L1290 295C1265 400 1275 470 1320 540L1240 580 1150 550C1195 480 1215 380 1210 280Z"/>
<path d="M900 195L1080 190 1330 240 1340 290 1290 300 1100 250 900 225Z"/>
<path d="M370 380L700 270 900 200 1100 200 1130 235 800 335 560 455 430 425Z"/>
<path d="M140 440L260 470C245 560 250 680 300 800L290 840 200 880 110 830C150 720 175 600 140 440Z"/>
<path d="M450 540L600 575C560 680 580 800 680 920L530 1025 400 960C470 860 490 700 450 540Z"/>
<path d="M90 385L620 510 640 570 600 580 110 440Z"/>
<path d="M740 80L770 65 800 90 780 440 740 450Z"/>
</g>
<path d="M520 760L600 740C590 800 620 860 680 920L530 1025Z" fill="#d2d2ce"/><path d="M200 640C215 720 250 780 300 800L290 840 200 880Z" fill="#d4d4d0"/>
<path d="M970 400L1020 400C1025 440 1035 460 1050 480L970 510Z" fill="#d2d2ce"/><path d="M1240 440L1272 430C1280 480 1300 510 1320 540L1240 580Z" fill="#d2d2ce"/>
<polygon points="70,365 140,350 640,480 645,560 600,575 615,510 90,388" fill="#222"/>
<polygon points="380,380 700,272 900,205 700,300 440,400" fill="#2a2a2a"/><polygon points="240,350 300,335 340,370 300,395 250,385" fill="#333"/>
<polygon points="690,250 760,280 760,440 700,400" fill="#333"/><polygon points="700,350 750,360 750,420 705,400" fill="#a05050"/>
<polygon points="765,70 800,90 795,160 775,150" fill="#222"/>
<g stroke="#ff20e0" stroke-width="11" fill="#ff20e0"><path d="M345 480L520 530"/><polygon points="500,505 560,540 495,550" stroke="none"/><path d="M900 305L1050 257"/><polygon points="1030,240 1090,245 1045,280" stroke="none"/><path d="M745 290V110"/><polygon points="725,115 745,70 765,115" stroke="none"/></g>
<g font-family="Liberation Sans,sans-serif" font-size="58" fill="#e820d0"><text x="352" y="585">d<tspan font-size="34" dy="12">1</tspan></text><text x="1040" y="335">d<tspan font-size="34" dy="12">2</tspan></text><text x="652" y="190">d<tspan font-size="34" dy="12">3</tspan></text></g>
<g font-family="Liberation Sans,sans-serif" font-size="76" fill="#1a1a1a"><text x="100" y="775">F<tspan font-size="46" dy="12">B</tspan></text><text x="795" y="478">F<tspan font-size="46" dy="12">T</tspan></text><text x="615" y="850" font-size="48">d<tspan font-size="28" dy="8">2</tspan></text><text transform="translate(690,745) rotate(-90)" font-size="34">d₁+a₁+a₃</text><text transform="translate(350,785) rotate(16)" font-size="34">d₁+a₂</text></g>
<g stroke="#111" stroke-width="3"><path d="M710 520V750M215 780L490 862M440 892L770 732"/><path d="M755 590V760" stroke-dasharray="6 6"/></g>
<path d="M215 780V610" stroke="#1010f0" stroke-width="12"/><polygon points="198,620 215,575 232,620" fill="#1010f0"/>
<path d="M215 780L360 722" stroke="#20e020" stroke-width="12"/><polygon points="345,708 398,708 360,742" fill="#20e020"/>
<path d="M215 780L365 852" stroke="#e01010" stroke-width="12"/><polygon points="372,834 402,868 352,868" fill="#e01010"/>
<path d="M755 485L690 507" stroke="#20e020" stroke-width="10"/><polygon points="692,492 652,518 698,524" fill="#20e020"/>
<path d="M755 485L840 512" stroke="#e01010" stroke-width="10"/><polygon points="842,498 876,522 832,528" fill="#e01010"/>
<path d="M755 485V560" stroke="#1010c0" stroke-width="10"/><polygon points="741,555 755,590 769,555" fill="#1010c0"/>
</svg>
<span class="t" style="left:257px;top:36px">Robot Name</span>
<div class="in" style="left:307px;top:32px;width:373px;height:15.500px"></div><span class="t" style="left:309px;top:36px">H Bot</span>
<span class="t" style="left:257px;top:61px">Set the translation along the X,Y,Z axes</span>
<span class="t" style="left:257px;top:87px">Base shift (H₀)</span>
<span class="t" style="left:257px;top:126.500px">End-effector shift (H₁)</span>
<div class="cb" style="left:342.500px;top:76.500px;width:340px;height:14px"></div>
<span class="t" style="left:346px;top:80px;font-family:'Liberation Mono',monospace;font-size:7.450px;color:#f0f0f0;-webkit-text-stroke:.2px #f0f0f0">[X,Y,Z]mm | Rot[X,Y ,Z  ]deg - Fanuc/Motoman (c</span>
<div class="f" style="left:342.500px;top:92px;width:55px;background:#ffaaaa">0.000</div><div class="f" style="left:397.500px;top:92px;width:55px;background:#aaffaa">0.000</div><div class="f" style="left:452.500px;top:92px;width:54px;background:#aaaaff">0.000</div><div class="f" style="left:506.500px;top:92px;width:55px;background:#aaffff">0.000</div>
<div class="cb" style="left:342.500px;top:115.500px;width:340px;height:14px"></div>
<span class="t" style="left:346px;top:119px;font-family:'Liberation Mono',monospace;font-size:7.450px;color:#f0f0f0;-webkit-text-stroke:.2px #f0f0f0">[X,Y,Z]mm | Rot[X,Y ,Z  ]deg - Fanuc/Motoman (c</span>
<div class="f" style="left:342.500px;top:131px;width:55px;background:#ffaaaa">0.000</div><div class="f" style="left:397.500px;top:131px;width:55px;background:#aaffaa">0.000</div><div class="f" style="left:452.500px;top:131px;width:54px;background:#aaaaff">0.000</div><div class="f" style="left:506.500px;top:131px;width:55px;background:#aaffff">0.000</div>
<span class="t" style="left:287px;top:156.7px">a₁ (mm)</span>
<div class="sp" style="left:320.500px;top:154.2px;width:56px;padding-right:5px">0.000</div>
<svg class="abs" style="left:377px;top:154.7px" width="8" height="12" viewBox="0 0 8 12"><path d="M1 5l3-3.500 3 3.500zM1 7.500l3 3.500 3-3.500z" fill="#c8c8c8"/></svg>
<span class="t" style="left:287px;top:177.5px">d₁ (mm)</span>
<div class="sp" style="left:320.500px;top:175.0px;width:56px;padding-right:5px">0.000</div>
<svg class="abs" style="left:377px;top:175.5px" width="8" height="12" viewBox="0 0 8 12"><path d="M1 5l3-3.500 3 3.500zM1 7.500l3 3.500 3-3.500z" fill="#c8c8c8"/></svg>
<span class="t" style="left:287px;top:198.5px">a₂ (mm)</span>
<div class="sp" style="left:320.500px;top:196.0px;width:56px;padding-right:5px">0.000</div>
<svg class="abs" style="left:377px;top:196.5px" width="8" height="12" viewBox="0 0 8 12"><path d="M1 5l3-3.500 3 3.500zM1 7.500l3 3.500 3-3.500z" fill="#c8c8c8"/></svg>
<span class="t" style="left:287px;top:219.4px">d₂ (mm)</span>
<div class="sp" style="left:320.500px;top:216.9px;width:56px;padding-right:5px">0.000</div>
<svg class="abs" style="left:377px;top:217.4px" width="8" height="12" viewBox="0 0 8 12"><path d="M1 5l3-3.500 3 3.500zM1 7.500l3 3.500 3-3.500z" fill="#c8c8c8"/></svg>
<span class="t" style="left:287px;top:240.5px">a₃ (mm)</span>
<div class="sp" style="left:320.500px;top:238.0px;width:56px;padding-right:5px">0.000</div>
<svg class="abs" style="left:377px;top:238.5px" width="8" height="12" viewBox="0 0 8 12"><path d="M1 5l3-3.500 3 3.500zM1 7.500l3 3.500 3-3.500z" fill="#c8c8c8"/></svg>
<span class="t" style="left:287px;top:261.3px">d₃ (mm)</span>
<div class="sp" style="left:320.500px;top:258.8px;width:56px;padding-right:5px">0.000</div>
<svg class="abs" style="left:377px;top:259.3px" width="8" height="12" viewBox="0 0 8 12"><path d="M1 5l3-3.500 3 3.500zM1 7.500l3 3.500 3-3.500z" fill="#c8c8c8"/></svg>
<span class="t" style="left:8px;top:265.500px">Robot type</span>
<div class="abs" style="left:9px;top:278px;width:149.500px;height:234.500px;background:#2b2b2b;border:1px solid #353535;border-radius:2px"></div>
<div class="rd" style="top:287.2px"></div><span class="rl" style="top:289.9px">1 rotative axis</span>
<div class="rd" style="top:305.8px"></div><span class="rl" style="top:308.5px">2 rotative axes</span>
<div class="rd" style="top:324.7px"></div><span class="rl" style="top:327.4px">1 linear axis</span>
<div class="rd" style="top:343.3px"></div><span class="rl" style="top:346.0px">2 linear axes (T bot)</span>
<div class="rd" style="top:362.3px"></div><span class="rl" style="top:365.0px">1 linear + 1 rotative axis</span>
<div class="rd" style="top:380.9px"></div><span class="rl" style="top:383.6px">2-finger gripper</span>
<div class="rd" style="top:399.5px"></div><div class="abs" style="left:21.500px;top:402.5px;width:5px;height:5px;border-radius:50%;background:#f0f0f0"></div><span class="rl" style="top:402.2px">3 linear axes (H bot)</span>
<div class="rd" style="top:418.4px"></div><span class="rl" style="top:421.1px">4 axes SCARA robot</span>
<div class="rd" style="top:437.0px"></div><span class="rl" style="top:439.7px">4 axes SCARA robot (T=axis 2)</span>
<div class="rd" style="top:456.0px"></div><span class="rl" style="top:458.7px">6 axes industrial robot</span>
<div class="rd" style="top:474.6px"></div><span class="rl" style="top:477.3px">6 axes collaborative robot</span>
<div class="rd" style="top:493.5px"></div><span class="rl" style="top:496.2px">7 axes industrial robot</span>
<span class="t" style="left:257px;top:295px">Base reference (F₀)</span>
<div class="cb" style="left:333.500px;top:292px;width:322px;height:14.500px"></div>
<svg class="abs" style="left:643px;top:297px" width="8" height="5" viewBox="0 0 8 5"><path d="M.5.5h7l-3.500 4z" fill="#c8c8c8"/></svg>
<span class="t" style="left:279.9px;top:313.500px;width:80px;text-align:center">Object</span>
<span class="t" style="left:351.0px;top:313.500px;width:80px;text-align:center">Build joints</span>
<span class="t" style="left:422.1px;top:313.500px;width:80px;text-align:center">Home</span>
<span class="t" style="left:482.9px;top:313.500px;width:80px;text-align:center">Invert sense</span>
<span class="t" style="left:539.5px;top:313.500px;width:80px;text-align:center">Minimum limit</span>
<span class="t" style="left:601.4px;top:313.500px;width:80px;text-align:center">Maximum limit</span>
<span class="t" style="left:218.500px;width:60px;text-align:right;top:332.1px">Base</span>
<div class="cb" style="left:288px;top:328.6px;width:65.500px"></div>
<svg class="abs" style="left:292px;top:331.1px" width="10" height="10" viewBox="0 0 10 10"><path d="M1.500 1.500l7 7M8.500 1.500l-7 7" stroke="#e01818" stroke-width="2.400"/></svg>
<span class="t" style="left:304px;top:332.1px">None</span>
<svg class="abs" style="left:341px;top:333.6px" width="8" height="5" viewBox="0 0 8 5"><path d="M.5.5h7l-3.500 4z" fill="#c8c8c8"/></svg>
<span class="t" style="left:222px;width:60px;text-align:right;top:354.7px">Joint 1</span>
<div class="cb" style="left:288px;top:351.2px;width:65.500px"></div>
<svg class="abs" style="left:292px;top:353.7px" width="10" height="10" viewBox="0 0 10 10"><path d="M1.500 1.500l7 7M8.500 1.500l-7 7" stroke="#e01818" stroke-width="2.400"/></svg>
<span class="t" style="left:304px;top:354.7px">None</span>
<svg class="abs" style="left:341px;top:356.2px" width="8" height="5" viewBox="0 0 8 5"><path d="M.5.5h7l-3.500 4z" fill="#c8c8c8"/></svg>
<div class="sp" style="left:359px;top:352.2px;width:56px;padding-right:5.500px">0.000</div>
<svg class="abs" style="left:415.5px;top:352.7px" width="8" height="12" viewBox="0 0 8 12"><path d="M1 5l3-3.500 3 3.500zM1 7.500l3 3.500 3-3.500z" fill="#c8c8c8"/></svg>
<div class="sp" style="left:430px;top:352.2px;width:57px;padding-right:6px">0.000</div>
<svg class="abs" style="left:487px;top:352.7px" width="8" height="12" viewBox="0 0 8 12"><path d="M1 5l3-3.500 3 3.500zM1 7.500l3 3.500 3-3.500z" fill="#c8c8c8"/></svg>
<div class="abs" style="left:502.500px;top:353.2px;width:8px;height:8px;background:#1a1a1a;border:1px solid #252525"></div>
<span class="t" style="left:514.500px;top:354.2px">Invert</span>
<div class="sp" style="left:552px;top:352.2px;width:48px;padding-right:6.500px">-200.0</div>
<svg class="abs" style="left:600px;top:352.7px" width="8" height="12" viewBox="0 0 8 12"><path d="M1 5l3-3.500 3 3.500zM1 7.500l3 3.500 3-3.500z" fill="#c8c8c8"/></svg>
<div class="sp" style="left:614px;top:352.2px;width:49px;padding-right:7px">200.0</div>
<svg class="abs" style="left:663px;top:352.7px" width="8" height="12" viewBox="0 0 8 12"><path d="M1 5l3-3.500 3 3.500zM1 7.500l3 3.500 3-3.500z" fill="#c8c8c8"/></svg>
<span class="t" style="left:222px;width:60px;text-align:right;top:377.3px">Joint 2</span>
<div class="cb" style="left:288px;top:373.8px;width:65.500px"></div>
<svg class="abs" style="left:292px;top:376.3px" width="10" height="10" viewBox="0 0 10 10"><path d="M1.500 1.500l7 7M8.500 1.500l-7 7" stroke="#e01818" stroke-width="2.400"/></svg>
<span class="t" style="left:304px;top:377.3px">None</span>
<svg class="abs" style="left:341px;top:378.8px" width="8" height="5" viewBox="0 0 8 5"><path d="M.5.5h7l-3.500 4z" fill="#c8c8c8"/></svg>
<div class="sp" style="left:359px;top:374.8px;width:56px;padding-right:5.500px">0.000</div>
<svg class="abs" style="left:415.5px;top:375.3px" width="8" height="12" viewBox="0 0 8 12"><path d="M1 5l3-3.500 3 3.500zM1 7.500l3 3.500 3-3.500z" fill="#c8c8c8"/></svg>
<div class="sp" style="left:430px;top:374.8px;width:57px;padding-right:6px">0.000</div>
<svg class="abs" style="left:487px;top:375.3px" width="8" height="12" viewBox="0 0 8 12"><path d="M1 5l3-3.500 3 3.500zM1 7.500l3 3.500 3-3.500z" fill="#c8c8c8"/></svg>
<div class="abs" style="left:502.500px;top:375.8px;width:8px;height:8px;background:#1a1a1a;border:1px solid #252525"></div>
<span class="t" style="left:514.500px;top:376.8px">Invert</span>
<div class="sp" style="left:552px;top:374.8px;width:48px;padding-right:6.500px">-200.0</div>
<svg class="abs" style="left:600px;top:375.3px" width="8" height="12" viewBox="0 0 8 12"><path d="M1 5l3-3.500 3 3.500zM1 7.500l3 3.500 3-3.500z" fill="#c8c8c8"/></svg>
<div class="sp" style="left:614px;top:374.8px;width:49px;padding-right:7px">200.0</div>
<svg class="abs" style="left:663px;top:375.3px" width="8" height="12" viewBox="0 0 8 12"><path d="M1 5l3-3.500 3 3.500zM1 7.500l3 3.500 3-3.500z" fill="#c8c8c8"/></svg>
<span class="t" style="left:222px;width:60px;text-align:right;top:399.5px">Joint 3</span>
<div class="cb" style="left:288px;top:396.0px;width:65.500px"></div>
<svg class="abs" style="left:292px;top:398.5px" width="10" height="10" viewBox="0 0 10 10"><path d="M1.500 1.500l7 7M8.500 1.500l-7 7" stroke="#e01818" stroke-width="2.400"/></svg>
<span class="t" style="left:304px;top:399.5px">None</span>
<svg class="abs" style="left:341px;top:401.0px" width="8" height="5" viewBox="0 0 8 5"><path d="M.5.5h7l-3.500 4z" fill="#c8c8c8"/></svg>
<div class="sp" style="left:359px;top:397.0px;width:56px;padding-right:5.500px">0.000</div>
<svg class="abs" style="left:415.5px;top:397.5px" width="8" height="12" viewBox="0 0 8 12"><path d="M1 5l3-3.500 3 3.500zM1 7.500l3 3.500 3-3.500z" fill="#c8c8c8"/></svg>
<div class="sp" style="left:430px;top:397.0px;width:57px;padding-right:6px">0.000</div>
<svg class="abs" style="left:487px;top:397.5px" width="8" height="12" viewBox="0 0 8 12"><path d="M1 5l3-3.500 3 3.500zM1 7.500l3 3.500 3-3.500z" fill="#c8c8c8"/></svg>
<div class="abs" style="left:502.500px;top:398.0px;width:8px;height:8px;background:#1a1a1a;border:1px solid #252525"></div>
<span class="t" style="left:514.500px;top:399.0px">Invert</span>
<div class="sp" style="left:552px;top:397.0px;width:48px;padding-right:6.500px">-200.0</div>
<svg class="abs" style="left:600px;top:397.5px" width="8" height="12" viewBox="0 0 8 12"><path d="M1 5l3-3.500 3 3.500zM1 7.500l3 3.500 3-3.500z" fill="#c8c8c8"/></svg>
<div class="sp" style="left:614px;top:397.0px;width:49px;padding-right:7px">200.0</div>
<svg class="abs" style="left:663px;top:397.5px" width="8" height="12" viewBox="0 0 8 12"><path d="M1 5l3-3.500 3 3.500zM1 7.500l3 3.500 3-3.500z" fill="#c8c8c8"/></svg>
<div class="btn" style="left:483px;width:58.500px">Update</div><div class="btn" style="left:547.500px;width:58.500px">OK</div><div class="btn" style="left:612.500px;width:58px">Cancel</div>
</div>
<div id="measure" class="abs" style="left:546px;top:281.500px;width:376.500px;height:382.500px;background:#2d2d2d;z-index:5;box-shadow:0 0 3px rgba(0,0,0,.5)">
<style>
#measure .t{font-size:8.300px;color:#fff}
#measure .b{font-weight:bold;font-size:8.800px}
#measure .btn{position:absolute;background:#383838;border:1px solid #4a4a4a;border-radius:2px}
#measure .f{position:absolute;height:14.500px;font-family:"Liberation Mono",monospace;font-size:7.500px;color:#2a2a2a;-webkit-text-stroke:.2px #2a2a2a;text-align:right;line-height:15px;padding-right:4.500px}
#measure .th{position:absolute;top:166px;height:14.500px;background:#383838;border-right:1px solid #2a2a2a;font-size:8.600px;text-align:center;line-height:14.500px;color:#fff}
</style>
<div class="abs" style="left:0;top:0;width:377px;height:23.500px;background:#fff"></div>
<div class="abs" style="left:362.500px;top:4.500px;width:14.500px;height:16px;background:#e2e2e2"></div>
<span class="t" style="left:7px;top:7.500px;color:#8a8a8a;font-size:8.300px">Measure</span>
<!-- row1 -->
<div class="btn" style="left:7px;top:31.500px;width:26px;height:20px"></div>
<div class="btn" style="left:39px;top:31.500px;width:25.500px;height:20px"></div>
<div class="btn" style="left:71px;top:31.500px;width:25.500px;height:20px"></div>
<div class="btn" style="left:102.500px;top:31.500px;width:25.500px;height:20px;border-color:#3e3e3e"></div>
<div class="btn" style="left:39px;top:58px;width:25.500px;height:20px;border-color:#3e3e3e"></div>
<div class="btn" style="left:71px;top:58px;width:25.500px;height:20px;border-color:#3e3e3e"></div>
<div class="btn" style="left:102.500px;top:58px;width:25.500px;height:20px;border-color:#3e3e3e"></div>
<div class="btn" style="left:280px;top:31.500px;width:25px;height:20px"></div>
<div class="btn" style="left:311.500px;top:31.500px;width:58px;height:20px"></div>
<div class="btn" style="left:280px;top:58px;width:25px;height:20px"></div>
<div class="btn" style="left:311.500px;top:58px;width:58px;height:20px"></div>
<span class="t" style="left:313.500px;top:37.800px;font-size:8px">Clear selection</span>
<span class="t" style="left:324.500px;top:64.300px;font-size:8.100px">Absolute</span>
<svg class="abs" style="left:0;top:28px" width="377" height="54" viewBox="0 28 377 54">
<rect x="11" y="37" width="18.500" height="9.500" rx="4.700" fill="#22c422"/><circle cx="24.800" cy="41.700" r="3.300" fill="#1c3c1c"/>
<path d="M44 37c5-2 10-1 14 2l-3 8c-3-2-6-3-9-2z" fill="#b8b8b8"/><path d="M44 37c5-2 10-1 14 2" stroke="#e8e8e8" stroke-width="1.200" fill="none"/>
<path d="M77 47l13.500-9.500" stroke="#0a0a0a" stroke-width="1.400" stroke-dasharray="1.500 1.500"/><circle cx="77.500" cy="46.500" r="1.900" fill="#20d020"/><circle cx="83.800" cy="42.300" r="1.900" fill="#20d020"/><circle cx="90" cy="38" r="1.900" fill="#20d020"/>
<path d="M108 46l6-9 8 3-3 8zM108 46l14-6M114 37l5 11" stroke="#5a5a5a" stroke-width="1" fill="none"/>
<path d="M45 66l12-2 2 7-12 2z" fill="#565656"/><path d="M79 64v9a5 2 0 0 0 10 0v-9a5 2 0 0 0-10 0z" fill="#585858"/><path d="M109 74l6-12 6 12z" fill="#5a5a5a"/>
<ellipse cx="292.500" cy="41.500" rx="6" ry="3.600" fill="#b0b0b0"/><path d="M286 36l2 2M299 36l-2 2M286 47l2-2M299 47l-2-2" stroke="#777" stroke-width=".8"/>
<path d="M287 63l6-3 6 9-7 4z" fill="#d8d8d8"/><path d="M289 62l4-2 3 10-5 2z" fill="#38c838"/>
</svg>
<span class="t" style="left:7px;top:85px;font-size:7.900px">510.000 mm-Line 510.000 mm</span>
<span class="t b" style="left:7px;top:103.500px">Point (mm)</span>
<div class="f" style="left:66.500px;top:100.500px;width:93px;background:#ffaaaa">1394.500</div>
<div class="f" style="left:161.500px;top:100.500px;width:92.500px;background:#aaffaa">352.500</div>
<div class="f" style="left:255.500px;top:100.500px;width:92.500px;background:#aaaaff">1235.000</div>
<span class="t b" style="left:7px;top:126px">Axis (ijk)</span>
<div class="f" style="left:66.500px;top:122.500px;width:93px;background:#ffaaaa">1.000</div>
<div class="f" style="left:161.500px;top:122.500px;width:92.500px;background:#aaffaa">0.000</div>
<div class="f" style="left:255.500px;top:122.500px;width:92.500px;background:#aaaaff">0.000</div>
<span class="t b" style="left:7px;top:148px">Radius (mm)</span>
<div class="abs" style="left:66.500px;top:145px;width:66.500px;height:14.500px;background:#131313"></div>
<span class="t" style="left:103px;top:148.500px;font-size:8.300px">-1.000</span>
<div class="btn" style="left:353px;top:99px;width:17px;height:17px"></div>
<div class="btn" style="left:353px;top:121.500px;width:17px;height:17px"></div>
<div class="btn" style="left:138.500px;top:144px;width:19px;height:17px"></div>
<svg class="abs" style="left:0;top:96px" width="377" height="68" viewBox="0 96 377 68"><g id="cp"><rect x="0" y="0" width="6" height="7.500" fill="#a0a0a0"/><rect x="2" y="2" width="6.500" height="8" fill="#ececec"/></g><use href="#cp" x="357" y="102"/><use href="#cp" x="357" y="124.500"/><use href="#cp" x="143.500" y="147"/></svg>
<span class="t" style="left:304px;top:148.500px;font-size:8.300px">Features</span>
<div class="abs" style="left:340.500px;top:145px;width:27.500px;height:14.500px;background:#131313"></div>
<span class="t" style="left:346px;top:148.500px">2</span>
<svg class="abs" style="left:360px;top:146px" width="8" height="13" viewBox="0 0 8 13"><path d="M1 5l3-3.500 3 3.500zM1 8l3 3.500 3-3.500z" fill="#d8d8d8"/></svg>
<!-- table -->
<div class="abs" style="left:8.500px;top:166px;width:361px;height:143px;background:#131313"></div>
<div class="abs" style="left:8.500px;top:180.500px;width:7.500px;height:128.500px;background:#2d2d2d"></div>
<div class="th" style="left:8.500px;width:130px">Selection</div>
<div class="th" style="left:138.500px;width:89.500px">Point (mm)</div>
<div class="th" style="left:228px;width:54.500px">Radius (mm)</div>
<div class="th" style="left:282.500px;width:53px">Axis (ijk)</div>
<div class="th" style="left:335.500px;width:34px;border:none"></div>
<div class="abs" style="left:8.500px;top:180.500px;width:7.500px;height:21.500px;background:#383838"></div>
<div class="abs" style="left:16px;top:201.500px;width:319.500px;height:1px;background:#2a2a2a"></div>
<div class="abs" style="left:138px;top:180.500px;width:1px;height:21px;background:#2a2a2a"></div><div class="abs" style="left:227.500px;top:180.500px;width:1px;height:21px;background:#2a2a2a"></div><div class="abs" style="left:282px;top:180.500px;width:1px;height:21px;background:#2a2a2a"></div><div class="abs" style="left:335px;top:180.500px;width:1px;height:21px;background:#2a2a2a"></div>
<span class="t" style="left:10px;top:187.500px;font-size:8px">1</span>
<span class="t" style="left:18.500px;top:187px;font-size:8.100px;letter-spacing:-.15px">510.000 mm-Line 510.000 mm</span>
<span class="t" style="left:142.500px;top:187px;font-size:8.100px;letter-spacing:-.1px">1394.5 | 352.5 | 1235.0</span>
<span class="t" style="left:286px;top:187px;font-size:8.100px;letter-spacing:-.1px">1.0 | 0.0 | 0.0</span>
</div>
<div id="statusbar"><span class="t" style="left:4px;top:6.800px;font-size:8.650px;color:#f0f0f0">Point on Surface-Axis 2 = [1029.393,412.000,1611.660] mm</span></div>
<div id="taskbar">
<div class="abs" style="left:36.500px;top:0;width:257px;height:30px;background:#383838;border:1px solid #585858"></div>
<div class="abs" style="left:405px;top:0;width:36px;height:30px;background:#484848"></div>
<div class="abs" style="left:371px;top:27.500px;width:30px;height:2px;background:#c8b8a0"></div><div class="abs" style="left:405px;top:27.500px;width:36px;height:2px;background:#d8d0c8"></div><div class="abs" style="left:445px;top:27.500px;width:30px;height:2px;background:#c8b8a0"></div>
<span class="t" style="left:66px;top:9.500px;font-size:10.900px;color:#dcdcdc">Type here to search</span>
<svg class="abs" style="left:0;top:0" width="500" height="30" viewBox="0 1051 500 30">
<path d="M11 1060.500l6-.9v5.600h-6zM18 1059.500l7.500-1.100v6.800H18zM11 1066.200h6v5.600l-6-.9zM18 1066.200h7.500v6.800L18 1071.900z" fill="#fff"/>
<circle cx="52.500" cy="1063.500" r="3.600" fill="none" stroke="#e0e0e0" stroke-width="1.200"/><path d="M50 1066.500l-4 4.500" stroke="#e0e0e0" stroke-width="1.300"/>
<circle cx="311.500" cy="1065.500" r="5.200" fill="none" stroke="#fff" stroke-width="1.800"/>
<path d="M342.500 1061h7v9h-7zM352 1061v9M342 1059.300h7M352 1063.500h2.500M352 1067.500h2.500" stroke="#fff" stroke-width="1.200" fill="none"/>
<circle cx="385.500" cy="1065.500" r="8.600" fill="#e8e8e8"/><path d="M385.500 1065.500l-7.450-4.300a8.600 8.600 0 0 1 14.900 0z" fill="#e03a2e"/><path d="M385.500 1065.500l7.450-4.300a8.600 8.600 0 0 1-7.450 12.900z" fill="#f4c20d"/><path d="M385.500 1065.500v8.600a8.600 8.600 0 0 1-7.450-12.900z" fill="#3aa757"/><circle cx="385.500" cy="1065.500" r="3.900" fill="#fff"/><circle cx="385.500" cy="1065.500" r="3" fill="#4285f4"/>
<circle cx="423" cy="1065.500" r="8.800" fill="#10294e"/><circle cx="423" cy="1065.500" r="7.200" fill="#e8eef8"/><circle cx="423" cy="1065.500" r="6" fill="#1c4a88"/><path d="M419 1069.500l2.500-5 3.500-3 2 2-3 2.500 2 3.500z" fill="#fff"/>
<path d="M451.500 1059h6l1.500 1.800h8.500v11.200h-16z" fill="#f0b830"/><path d="M451.500 1062.500h16v9.500h-16z" fill="#fcd868"/><path d="M455 1068h9v4h-9z" fill="#3a8ee0"/>
</svg>
</div>
<svg class="abs" style="left:1829px;top:982px;z-index:9" width="56" height="64" viewBox="1829 982 56 64"><circle cx="1855.900" cy="1005.900" r="20.800" fill="none" stroke="#11324f" stroke-width="1"/><circle cx="1855.900" cy="1005.900" r="18" fill="#123a5c"/><path d="M1845 1017l1.500-3h9l1.500 3zM1848 1013.500l1-4 6-10 3 1.500-5.500 9.500.5 3z" fill="#d4d6d8"/><path d="M1855 999.500l3-2.500 8 5.500-.5 3-2.500.5-1-3.500-5-2.500z" fill="#d4d6d8"/><path d="M1865.500 1006.500l1.500 0 .3 4.500-1 2.500-1-2.500z" fill="#d4d6d8"/><circle cx="1851" cy="1009.500" r="1.500" fill="#123a5c"/><circle cx="1858.800" cy="998.800" r="1.500" fill="#123a5c"/><rect x="1832.300" y="1029.400" width="47.400" height="12.700" fill="#0f3558"/><path d="M1836.500 1032.500h7.500v6.500h-7.500z" fill="#1d4a78"/><path d="M1839 1033.800v3.900l3.200-1.950z" fill="#0f3558"/><text x="1846.500" y="1038.700" font-family="Liberation Sans,sans-serif" font-size="7.500" font-weight="bold" fill="#1a446e">Subscribe</text></svg>
</body>
</html>
